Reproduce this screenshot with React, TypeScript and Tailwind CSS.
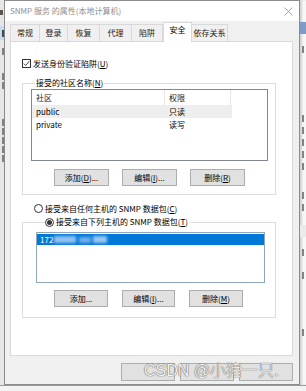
import React from 'react';

const btn = "h-[17px] w-[55px] flex items-center justify-center bg-[#e1e1e1] border border-[#adadad] text-[8px] leading-none text-black";

function Tab({ label, w, active }: { label: string; w: string; active?: boolean }) {
    if (active) {
        return (
            <div className={`${w} h-[20px] -mb-px relative z-10 flex items-start pt-[3px] justify-center bg-white border border-b-0 border-[#d9d9d9] text-[8px] leading-none text-black`}>
                {label}
            </div>
        );
    }
    return (
        <div className={`${w} h-[17px] flex items-center justify-center bg-[#f0f0f0] border border-b-0 border-l-0 first:border-l border-[#d9d9d9] text-[8px] leading-none text-[#222]`}>
            {label}
        </div>
    );
}

function Radio({ checked }: { checked?: boolean }) {
    return (
        <span className="w-[9px] h-[9px] rounded-full border border-[#333] bg-white flex items-center justify-center shrink-0">
            {checked && <span className="w-[5px] h-[5px] rounded-full bg-[#333]" />}
        </span>
    );
}

// tiny glyph fragments of the window behind the dialog
function Bit({ mt = 'mt-[4px]' }: { mt?: string }) {
    return <div className={`${mt} h-[7px] w-[2px] bg-[#555]/70`} />;
}

function Strip({ side }: { side: 'left' | 'right' }) {
    if (side === 'left') {
        return (
            <div className="w-[4px] h-full bg-[#e6e6e6] flex flex-col items-end overflow-hidden">
                <div className="h-[10px]" />
                <div className="h-[5px] w-[3px] bg-[#555] self-start" />
                <div className="h-[11px]" />
                <div className="h-[14px] w-full bg-[#c5d9f1] flex items-center justify-end"><div className="h-[7px] w-[2px] bg-[#444]" /></div>
                <Bit mt="mt-[8px]" />
                <Bit mt="mt-[18px]" />
                <Bit mt="mt-[2px]" />
                <Bit mt="mt-[30px]" />
                <Bit mt="mt-[2px]" />
                <Bit mt="mt-[2px]" />
                <Bit mt="mt-[2px]" />
                <Bit mt="mt-[2px]" />
            </div>
        );
    }
    return (
        <div className="w-[6px] h-full bg-[#f7f7f7] flex flex-col pl-[2px] overflow-hidden shadow-[inset_2px_0_2px_rgba(0,0,0,0.15)]">
            <div className="h-[22px]" />
            <div className="h-[12px] -ml-[2px] bg-[#7f9cc6]" />
            <Bit mt="mt-[12px]" />
            <Bit mt="mt-[62px]" />
            <Bit mt="mt-[5px]" />
            <Bit mt="mt-[5px]" />
            <Bit mt="mt-[5px]" />
            <Bit mt="mt-[5px]" />
            <Bit mt="mt-[22px]" />
            <Bit mt="mt-[5px]" />
            <div className="mt-[14px] h-[12px] -ml-[2px] bg-[#ebebeb]" />
            <Bit mt="mt-[12px]" />
            <Bit mt="mt-[16px]" />
            <Bit mt="mt-[50px]" />
        </div>
    );
}

export default function App() {
    return (
        <div className="w-[306px] h-[391px] overflow-hidden flex flex-col bg-[#ececec] font-['Noto_Sans_CJK_SC','Microsoft_YaHei',sans-serif]">
            <div className="h-[385px] flex">
                <Strip side="left" />

                {/* Dialog window */}
                <div className="w-[296px] h-full flex flex-col border border-[#8c8c8c] bg-[#f0f0f0] relative">
                    {/* Title bar */}
                    <div className="h-[20px] bg-white flex items-center justify-between pl-[5px] pr-[6px]">
                        <span className="text-[8px] leading-none text-[#8f8f8f]">SNMP 服务 的属性(本地计算机)</span>
                        <svg width="9" height="9" viewBox="0 0 9 9">
                            <path d="M0.5 0.5 L8.5 8.5 M8.5 0.5 L0.5 8.5" stroke="#9a9a9a" strokeWidth="0.9" />
                        </svg>
                    </div>

                    <div className="flex-1 flex flex-col pl-[5px] pr-[6px]">
                        {/* Tabs */}
                        <div className="h-[20px] flex items-end">
                            <Tab label="常规" w="w-[30px]" />
                            <Tab label="登录" w="w-[28px]" />
                            <Tab label="恢复" w="w-[32px]" />
                            <Tab label="代理" w="w-[32px]" />
                            <Tab label="陷阱" w="w-[31px]" />
                            <Tab label="安全" w="w-[29px]" active />
                            <Tab label="依存关系" w="w-[36px]" />
                        </div>

                        {/* Tab panel */}
                        <div className="h-[315px] bg-white border border-[#d9d9d9] flex flex-col pl-[11px] pr-[16px] text-[8px] leading-none text-black">
                            <label className="mt-[17px] flex items-center gap-[2px]">
                                <span className="w-[9px] h-[9px] border border-[#333] bg-white flex items-center justify-center">
                                    <svg width="7" height="7" viewBox="0 0 7 7">
                                        <path d="M0.8 3.6 L2.7 5.5 L6.3 1.2" fill="none" stroke="#333" strokeWidth="0.9" />
                                    </svg>
                                </span>
                                <span>发送身份验证陷阱(<span className="underline">U</span>)</span>
                            </label>

                            {/* Accepted community names */}
                            <fieldset className="mt-[10px] border border-[#dcdcdc] pl-[8px] pr-[7px] pb-[8px]">
                                <legend className="ml-[4px] px-[1px] leading-[10px]">接受的社区名称(<span className="underline">N</span>)</legend>
                                <div className="h-[72px] mt-[1px] border border-[#828790] flex flex-col">
                                    <div className="h-[15px] flex text-[#222]">
                                        <div className="w-[133px] pl-[4px] flex items-center border-r border-[#e5e5e5]">社区</div>
                                        <div className="w-[66px] pl-[4px] flex items-center border-r border-[#e5e5e5]">权限</div>
                                    </div>
                                    <div className="h-[13px] w-[200px] flex items-center bg-[#eeeeee]">
                                        <span className="w-[133px] pl-[4px]">public</span>
                                        <span className="pl-[4px]">只读</span>
                                    </div>
                                    <div className="h-[13px] w-[200px] flex items-center">
                                        <span className="w-[133px] pl-[4px]">private</span>
                                        <span className="pl-[4px]">读写</span>
                                    </div>
                                </div>
                                <div className="mt-[8px] flex gap-[13px] pl-[23px]">
                                    <div className={btn}>添加(<span className="underline">D</span>)...</div>
                                    <div className={btn}>编辑(<span className="underline">I</span>)...</div>
                                    <div className={btn}>删除(<span className="underline">R</span>)</div>
                                </div>
                            </fieldset>

                            <label className="mt-[9px] ml-[12px] flex items-center gap-[2px]">
                                <Radio />
                                <span>接受来自任何主机的 SNMP 数据包(<span className="underline">C</span>)</span>
                            </label>

                            {/* Accepted hosts */}
                            <fieldset className="mt-[4px] border border-[#dcdcdc] pl-[13px] pr-[10px] pb-[10px]">
                                <legend className="ml-[9px] pr-[2px] leading-[10px] flex items-center gap-[2px]">
                                    <Radio checked />
                                    <span>接受来自下列主机的 SNMP 数据包(<span className="underline">T</span>)</span>
                                </legend>
                                <div className="h-[51px] mt-[5px] border border-[#8fa6c0] pt-px">
                                    <div className="h-[11px] bg-[#0078d7] flex items-center pl-[3px] text-white">
                                        <span>172</span>
                                        <span className="ml-[1px] w-[22px] h-[7px] bg-[#cfe3ff]/70 blur-[1.5px]" />
                                        <span className="ml-[3px] w-[12px] h-[6px] bg-[#b8d4f5]/60 blur-[1.5px]" />
                                        <span className="ml-[2px] w-[14px] h-[7px] bg-[#dbe9fb]/70 blur-[1.5px]" />
                                    </div>
                                </div>
                                <div className="mt-[7px] flex gap-[14px] pl-[18px]">
                                    <div className={btn + " !w-[54px]"}>添加...</div>
                                    <div className={btn + " !w-[53px]"}>编辑(<span className="underline">I</span>)...</div>
                                    <div className={btn + " !w-[54px]"}>删除(<span className="underline">M</span>)</div>
                                </div>
                            </fieldset>
                        </div>

                        {/* Dialog buttons, mostly hidden under the watermark */}
                        <div className="mt-[7px] flex justify-end gap-[5px]">
                            <div className="h-[18px] w-[54px] bg-[#e1e1e1] border border-[#adadad]" />
                            <div className="h-[18px] w-[54px] bg-[#e1e1e1] border border-[#adadad]" />
                            <div className="h-[18px] w-[54px] bg-[#e1e1e1] border border-[#adadad]" />
                        </div>
                    </div>

                    {/* CSDN watermark */}
                    <div className="absolute left-[135px] top-[360px] h-[20px] flex items-center text-[16px] leading-none font-light text-[#f4f4f4] [text-shadow:0_0_1px_#555,0_0_1px_#555] font-['Liberation_Sans','Noto_Sans_CJK_SC',sans-serif] whitespace-nowrap">
                        <span className="pl-[4px]">CSDN @小猪一只.</span>
                    </div>
                </div>

                <Strip side="right" />
            </div>
            <div className="h-[1px] bg-[#9a9a9a]" />
            <div className="flex-1 bg-[#f3f3f3]" />
        </div>
    );
}
